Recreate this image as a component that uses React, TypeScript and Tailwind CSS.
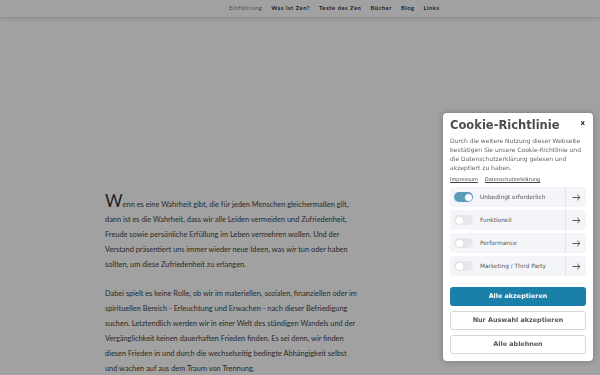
import { useState } from "react"

const navItems = ["Einführung", "Was ist Zen?", "Texte des Zen", "Bücher", "Blog", "Links"]

const categories = [
  { label: "Unbedingt erforderlich", on: true },
  { label: "Funktionell", on: false },
  { label: "Performance", on: false },
  { label: "Marketing / Third Party", on: false },
]

const Toggle = ({ on }: { on: boolean }) => (
  <span
    className={`flex h-[10px] w-[19px] items-center rounded-full px-[1.5px] ${
      on ? "justify-end bg-[#5d9cbb]" : "justify-start bg-[#e6e6ea]"
    }`}
  >
    <span className="h-[7px] w-[7px] rounded-full bg-white" />
  </span>
)

const Arrow = () => (
  <svg width="9" height="7" viewBox="0 0 9 7" fill="none" stroke="#444" strokeWidth="0.9">
    <path d="M0.5 3.5h7.5M5.2 0.8l2.8 2.7-2.8 2.7" />
  </svg>
)

const CookieBanner = () => {
  const [cats] = useState(categories)
  return (
    <div className="fixed left-[443px] top-[113px] z-20 w-[150px] rounded-[4px] bg-white px-[7px] pb-[7px] pt-[5px] font-['DejaVu_Sans',sans-serif] shadow-[0_0_6px_rgba(0,0,0,0.25)]">
      <div className="flex items-start justify-between">
        <h2 className="text-[11.5px] font-bold leading-[14px] text-[#4d4d4d]">Cookie-Richtlinie</h2>
        <span className="pr-[1px] text-[7px] font-bold leading-[10px] text-[#222]">x</span>
      </div>
      <p className="mt-[4px] pr-[2px] text-[6px] leading-[9px] text-[#666]">
        Durch die weitere Nutzung dieser Webseite bestätigen Sie unsere Cookie-Richtlinie und die
        Datenschutzerklärung gelesen und akzeptiert zu haben.
      </p>
      <div className="mt-[3px] flex gap-[7px] text-[5px] leading-[8px] text-[#444] underline">
        <span>Impressum</span>
        <span>Datenschutzerklärung</span>
      </div>
      <div className="mt-[4px] flex flex-col gap-[3px]">
        {cats.map((c) => (
          <div key={c.label} className="flex h-[20px] items-center rounded-[3px] bg-[#f4f5f9]">
            <div className="flex flex-1 items-center gap-[7px] pl-[4px]">
              <Toggle on={c.on} />
              <span className="text-[5.8px] text-[#555]">{c.label}</span>
            </div>
            <div className="flex h-full w-[21px] items-center justify-center border-l border-[#e2e3e8]">
              <Arrow />
            </div>
          </div>
        ))}
      </div>
      <div className="mt-[11px] flex flex-col gap-[5px] text-[6.4px] font-bold">
        <button className="h-[19px] rounded-[3px] bg-[#1a7fa9] text-white">Alle akzeptieren</button>
        <button className="h-[19px] rounded-[3px] border border-[#d6d6dc] bg-white text-[#555]">
          Nur Auswahl akzeptieren
        </button>
        <button className="h-[19px] rounded-[3px] border border-[#d6d6dc] bg-white text-[#555]">
          Alle ablehnen
        </button>
      </div>
    </div>
  )
}

export default function App() {
  return (
    <div className="relative h-[375px] w-[600px] overflow-hidden bg-white">
      <header className="relative z-0 flex h-[17px] items-center bg-white pl-[229px] shadow-[0_1px_4px_rgba(0,0,0,0.18)]">
        <nav className="flex gap-[9px] font-['Lato',sans-serif] text-[5.8px] font-bold tracking-[0.09em] text-[#333]">
          {navItems.map((n, i) => (
            <span key={n} className={i === 0 ? "font-normal text-[#777]" : ""}>
              {n}
            </span>
          ))}
        </nav>
      </header>
      <main className="ml-[105px] mt-[180px] w-[252px] font-['Lato',sans-serif] text-[7.4px] leading-[15px] text-[#444]">
        <p>
          <span className="text-[17px] leading-[0] text-[#333]">W</span>enn es eine Wahrheit gibt, die für jeden
          Menschen gleichermaßen gilt, dann ist es die Wahrheit, dass wir alle Leiden vermeiden und Zufriedenheit,
          Freude sowie persönliche Erfüllung im Leben vermehren wollen. Und der Verstand präsentiert uns immer wieder
          neue Ideen, was wir tun oder haben sollten, um diese Zufriedenheit zu erlangen.
        </p>
        <p className="mt-[14px]">
          Dabei spielt es keine Rolle, ob wir im materiellen, sozialen, finanziellen oder im spirituellen Bereich -
          Erleuchtung und Erwachen - nach dieser Befriedigung suchen. Letztendlich werden wir in einer Welt des
          ständigen Wandels und der Vergänglichkeit keinen dauerhaften Frieden finden. Es sei denn, wir finden diesen
          Frieden in und durch die wechselseitig bedingte Abhängigkeit selbst und wachen auf aus dem Traum von
          Trennung.
        </p>
      </main>
      <div className="absolute inset-0 z-10 bg-[rgba(0,0,0,0.37)]" />
      <CookieBanner />
    </div>
  )
}
